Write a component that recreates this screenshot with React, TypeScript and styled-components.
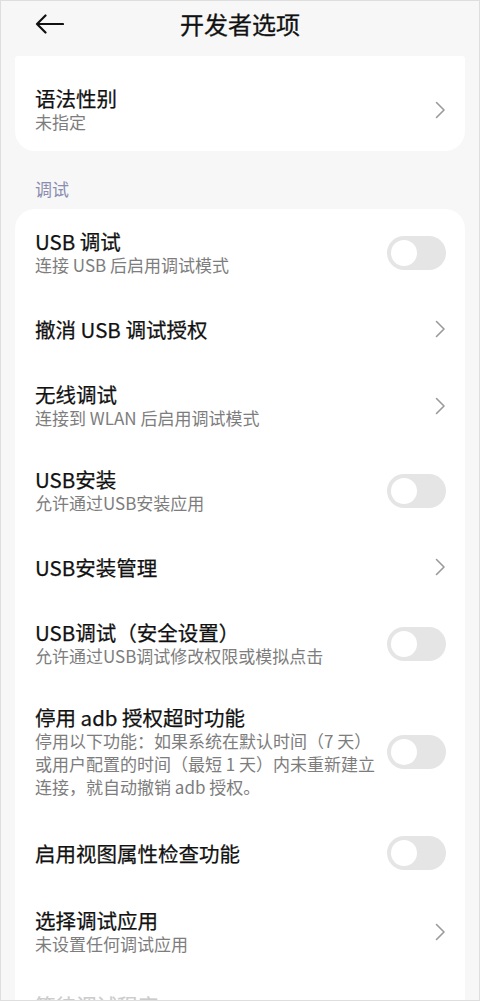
import React from "react";
import styled, { createGlobalStyle } from "styled-components";

const GlobalStyle = createGlobalStyle`
  html, body { margin: 0; padding: 0; background: #f7f7f7; }
  * { box-sizing: border-box; }
  body { font-family: "Noto Sans CJK SC", "Noto Sans", sans-serif; }
`;

const Screen = styled.div`
  width: 480px;
  height: 1001px;
  overflow: hidden;
  background: #f7f7f7;
  border: 1px solid #dedede;
  display: flex;
  flex-direction: column;
`;

const Header = styled.header`
  height: 55px;
  flex-shrink: 0;
  display: grid;
  grid-template-columns: 60px 1fr 60px;
  align-items: start;
  padding: 8px 34px 0 34px;
`;

const BackButton = styled.div`
  width: 30px;
  height: 30px;
  display: flex;
  align-items: center;
`;

const Title = styled.h1`
  margin: 0;
  text-align: center;
  font-size: 24px;
  font-weight: 400;
  -webkit-text-stroke: 0.3px #111;
  color: #111;
  line-height: 30px;
`;

const Content = styled.div`
  padding: 0 14px;
  display: flex;
  flex-direction: column;
`;

const Card = styled.div<{ $top?: number; $flatTop?: boolean }>`
  background: #fff;
  border-radius: ${(p) => (p.$flatTop ? "3px 3px 20px 20px" : "20px")};
  padding-top: ${(p) => p.$top ?? 0}px;
  display: flex;
  flex-direction: column;
`;

const SectionLabel = styled.div`
  padding: 26px 20px 8px;
  font-size: 17px;
  line-height: 24px;
  color: #8a8db0;
`;

const Row = styled.div`
  min-height: 68px;
  padding: 20px 19px 18px 20px;
  display: flex;
  align-items: center;
  gap: 10px;
`;

const Texts = styled.div`
  flex: 1;
  min-width: 0;
  display: flex;
  flex-direction: column;
`;

const RowTitle = styled.div<{ $disabled?: boolean }>`
  font-size: 20.5px;
  line-height: 24px;
  font-weight: 400;
  color: ${(p) => (p.$disabled ? "#cccccc" : "#111")};
  -webkit-text-stroke: 0.25px ${(p) => (p.$disabled ? "#cccccc" : "#111")};
`;

const RowSub = styled.div`
  font-size: 17px;
  line-height: 23px;
  color: #7d7d7d;
  white-space: nowrap;
`;

const Track = styled.div`
  width: 59px;
  height: 34px;
  border-radius: 17px;
  background: #e5e5e5;
  flex-shrink: 0;
  display: flex;
  align-items: center;
  padding-left: 4px;
`;

const Knob = styled.div`
  width: 26px;
  height: 26px;
  border-radius: 50%;
  background: #fff;
`;

const ChevronBox = styled.div`
  width: 14px;
  display: flex;
  justify-content: flex-end;
  flex-shrink: 0;
`;

const Chevron = () => (
  <ChevronBox>
    <svg width="11" height="18" viewBox="0 0 11 18" fill="none">
      <path d="M1.5 1.5 L9 9 L1.5 16.5" stroke="#9a9a9a" strokeWidth="1.6" strokeLinecap="round" strokeLinejoin="round" />
    </svg>
  </ChevronBox>
);

const Toggle = () => (
  <Track>
    <Knob />
  </Track>
);

type Item = {
  title: string;
  sub?: string[];
  kind: "chevron" | "toggle" | "none";
  disabled?: boolean;
};

const ListRow = ({ item }: { item: Item }) => (
  <Row>
    <Texts>
      <RowTitle $disabled={item.disabled}>{item.title}</RowTitle>
      {item.sub?.map((s, i) => (
        <RowSub key={i}>{s}</RowSub>
      ))}
    </Texts>
    {item.kind === "chevron" && <Chevron />}
    {item.kind === "toggle" && <Toggle />}
  </Row>
);

const debugItems: Item[] = [
  { title: "USB 调试", sub: ["连接 USB 后启用调试模式"], kind: "toggle" },
  { title: "撤消 USB 调试授权", kind: "chevron" },
  { title: "无线调试", sub: ["连接到 WLAN 后启用调试模式"], kind: "chevron" },
  { title: "USB安装", sub: ["允许通过USB安装应用"], kind: "toggle" },
  { title: "USB安装管理", kind: "chevron" },
  { title: "USB调试（安全设置）", sub: ["允许通过USB调试修改权限或模拟点击"], kind: "toggle" },
  {
    title: "停用 adb 授权超时功能",
    sub: [
      "停用以下功能：如果系统在默认时间（7 天）",
      "或用户配置的时间（最短 1 天）内未重新建立",
      "连接，就自动撤销 adb 授权。",
    ],
    kind: "toggle",
  },
  { title: "启用视图属性检查功能", kind: "toggle" },
  { title: "选择调试应用", sub: ["未设置任何调试应用"], kind: "chevron" },
  { title: "等待调试程序", sub: ["调试应用会在执行前等待附加调试器"], kind: "toggle", disabled: true },
];

export default function App() {
  return (
    <>
      <GlobalStyle />
      <Screen>
        <Header>
          <BackButton>
            <svg width="29" height="20" viewBox="0 0 29 20" fill="none">
              <path d="M28 10 H2 M10.5 1.5 L2 10 L10.5 18.5" stroke="#111" strokeWidth="2.2" strokeLinecap="round" strokeLinejoin="round" />
            </svg>
          </BackButton>
          <Title>开发者选项</Title>
          <div />
        </Header>
        <Content>
          <Card $top={10} $flatTop>
            <ListRow item={{ title: "语法性别", sub: ["未指定"], kind: "chevron" }} />
          </Card>
          <SectionLabel>调试</SectionLabel>
          <Card>
            {debugItems.map((it, i) => (
              <ListRow key={i} item={it} />
            ))}
          </Card>
        </Content>
      </Screen>
    </>
  );
}
